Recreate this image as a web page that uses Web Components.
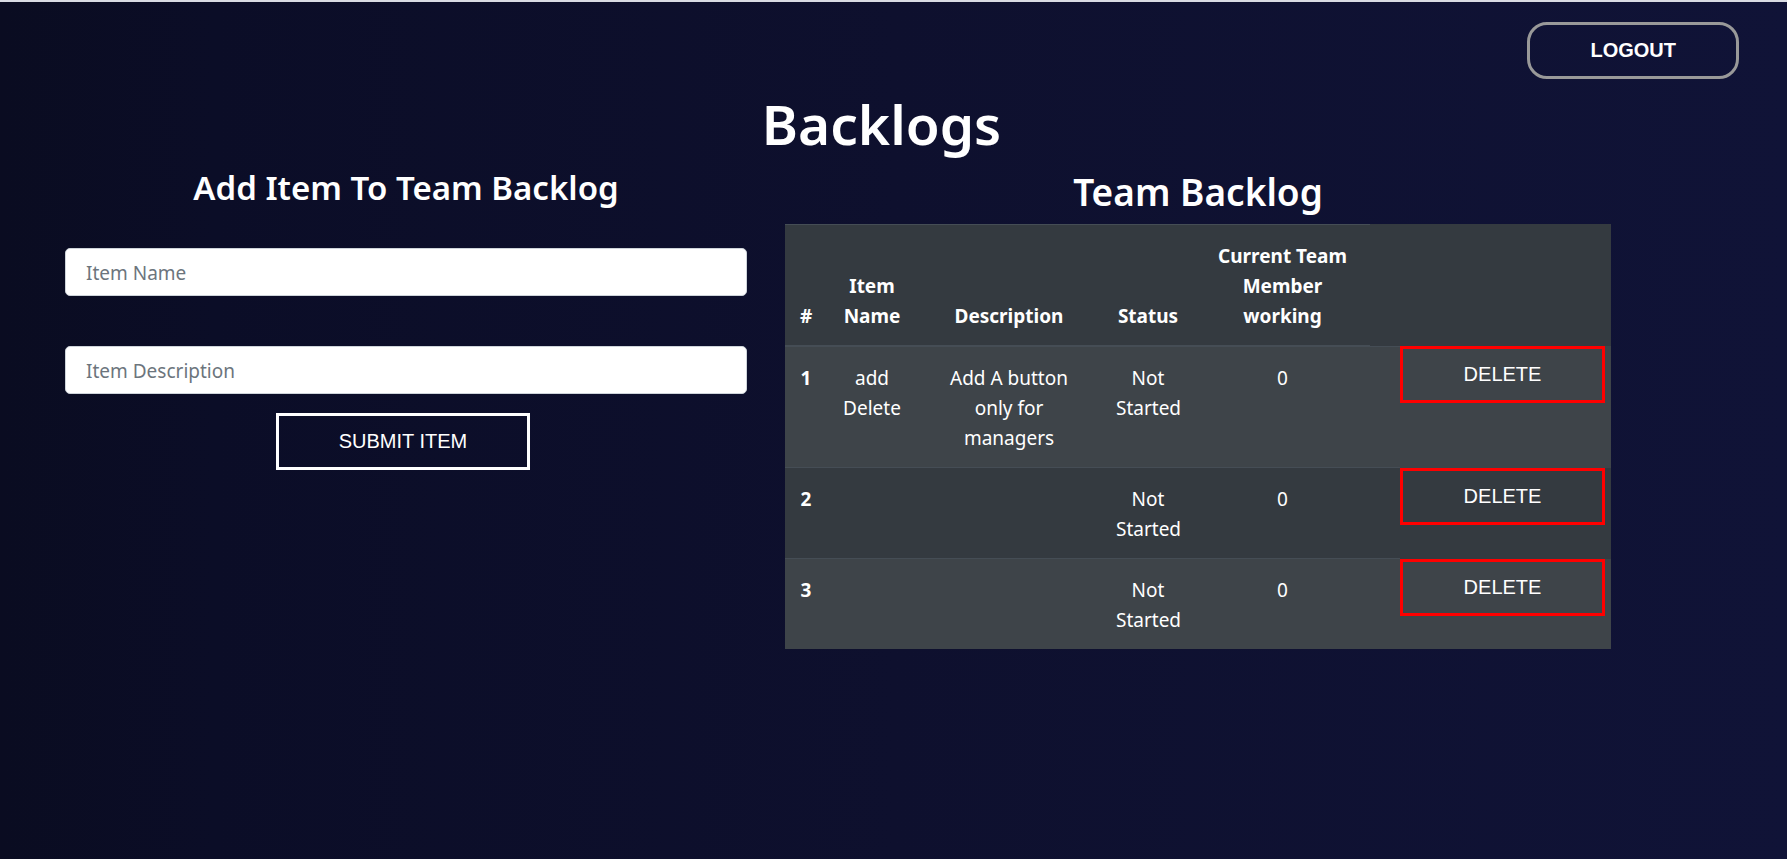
<!DOCTYPE html>
<html lang="en">
<head>
<meta charset="utf-8">
<meta name="viewport" content="width=device-width, initial-scale=1">
<title>Backlogs</title>
<style>
  body {
    margin: 0;
    font: 400 19px/30px "Noto Sans", "Open Sans", sans-serif;
    color: #fff;
    background: #0e102e;
  }
</style>
</head>
<body>
<backlog-app></backlog-app>

<template id="outline-button">
  <style>
    :host { display: inline-block; }
    button {
      display: block;
      box-sizing: border-box;
      width: 100%;
      margin: 0;
      padding: 14px 60px;
      border: 3px solid var(--outline, #fff);
      border-radius: var(--radius, 0);
      background: transparent;
      color: inherit;
      font: var(--weight, 400) 20px/23px "Liberation Sans", Arial, sans-serif;
      text-transform: uppercase;
      white-space: nowrap;
      cursor: pointer;
    }
  </style>
  <button type="button"><slot></slot></button>
</template>

<template id="text-field">
  <style>
    :host { display: block; }
    input {
      display: block;
      box-sizing: border-box;
      width: 100%;
      height: 48px;
      margin: 0;
      padding: 2px 20px 0;
      border: 1px solid #ced4da;
      border-radius: 5px;
      background: #fff;
      color: #495057;
      font: inherit;
    }
    input::placeholder { color: #6c757d; opacity: 1; }
  </style>
  <input type="text">
</template>

<template id="item-form">
  <style>
    :host { display: block; }
    h2 { margin: 0 0 40px; font-size: 33px; line-height: 40px; font-weight: 600; text-align: center; }
    .fields { display: grid; gap: 50px; }
    .actions { display: flex; justify-content: center; margin-top: 19px; padding-right: 6px; }
  </style>
  <h2>Add Item To Team Backlog</h2>
  <div class="fields">
    <text-field label="Item Name"></text-field>
    <text-field label="Item Description"></text-field>
  </div>
  <div class="actions"><outline-button>Submit Item</outline-button></div>
</template>

<template id="backlog-table">
  <style>
    :host { display: block; }
    h2 { margin: 0 0 8px; font-size: 37px; line-height: 48px; font-weight: 600; text-align: center; }
    table {
      width: 100%;
      table-layout: fixed;
      border-collapse: collapse;
      background: #343a40;
      text-align: center;
    }
    th, td { padding: 16px 15px 14px; border-top: 1px solid #454d55; vertical-align: top; }
    thead th { border-bottom: 2px solid #454d55; vertical-align: bottom; }
    thead td, td.action { padding: 0; border: 0; }
    td.gap { padding: 0; }
    tbody tr:nth-child(odd) { background: rgba(255, 255, 255, 0.05); }
    outline-button { display: block; margin-right: 6px; --outline: #f00; }
  </style>
  <h2>Team Backlog</h2>
  <table>
    <colgroup>
      <col style="width:42px"><col style="width:90px"><col style="width:184px">
      <col style="width:94px"><col style="width:175px"><col style="width:30px"><col style="width:211px">
    </colgroup>
    <thead>
      <tr>
        <th scope="col">#</th>
        <th scope="col">Item Name</th>
        <th scope="col">Description</th>
        <th scope="col">Status</th>
        <th scope="col">Current Team Member working</th>
        <td colspan="2"></td>
      </tr>
    </thead>
    <tbody></tbody>
  </table>
</template>

<template id="backlog-app">
  <style>
    :host {
      display: block;
      box-sizing: border-box;
      min-height: 100vh;
      border-top: 2px solid #d9dbe3;
      background: linear-gradient(90deg, #0a0c21, #0b0d27 12%, #0e102e 50%, #101337);
    }
    header { display: flex; justify-content: flex-end; padding: 20px 48px 0; }
    header outline-button { --outline: #999; --radius: 20px; --weight: 700; }
    h1 { margin: 12px 24px 11px 0; font-size: 55px; line-height: 66px; font-weight: 600; text-align: center; }
    main {
      display: grid;
      grid-template-columns: minmax(0, 682fr) minmax(0, 826fr);
      gap: 38px;
      padding: 0 176px 48px 65px;
    }
  </style>
  <header><outline-button>Logout</outline-button></header>
  <h1>Backlogs</h1>
  <main>
    <item-form></item-form>
    <backlog-table></backlog-table>
  </main>
</template>

<script>
  class TemplateElement extends HTMLElement {
    constructor() {
      super();
      const template = document.getElementById(this.localName);
      this.attachShadow({ mode: "open" }).append(template.content.cloneNode(true));
    }
  }

  customElements.define("outline-button", class extends TemplateElement {});

  customElements.define("text-field", class extends TemplateElement {
    connectedCallback() {
      const input = this.shadowRoot.querySelector("input");
      input.placeholder = this.getAttribute("label");
      input.setAttribute("aria-label", this.getAttribute("label"));
    }
  });

  customElements.define("item-form", class extends TemplateElement {});

  customElements.define("backlog-table", class extends TemplateElement {
    connectedCallback() {
      const items = [
        { name: "add Delete", description: "Add A button only for managers", status: "Not Started", member: 0 },
        { name: "", description: "", status: "Not Started", member: 0 },
        { name: "", description: "", status: "Not Started", member: 0 }
      ];
      this.shadowRoot.querySelector("tbody").innerHTML = items.map((item, i) => `
        <tr>
          <th scope="row">${i + 1}</th>
          <td>${item.name}</td>
          <td>${item.description}</td>
          <td>${item.status}</td>
          <td>${item.member}</td>
          <td class="gap"></td>
          <td class="action"><outline-button>Delete</outline-button></td>
        </tr>`).join("");
    }
  });

  customElements.define("backlog-app", class extends TemplateElement {});
</script>
</body>
</html>
